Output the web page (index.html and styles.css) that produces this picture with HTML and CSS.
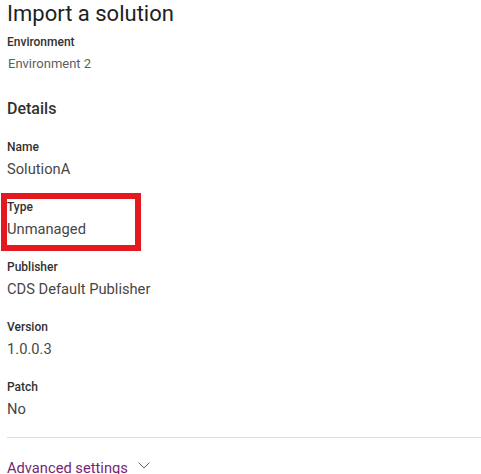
FILE: index.html
```html
<!DOCTYPE html>
<html>
<head>
<meta charset="utf-8">
<link rel="stylesheet" href="styles.css">
</head>
<body>
<div class="panel">
  <h1 class="title">Import a solution</h1>
  <div class="env">
    <div class="env-label">Environment</div>
    <div class="env-value">Environment 2</div>
  </div>
  <h2 class="section">Details</h2>
  <div class="fields">
    <div class="field">
      <div class="label">Name</div>
      <div class="value">SolutionA</div>
    </div>
    <div class="field highlighted">
      <div class="label">Type</div>
      <div class="value">Unmanaged</div>
    </div>
    <div class="field">
      <div class="label">Publisher</div>
      <div class="value">CDS Default Publisher</div>
    </div>
    <div class="field">
      <div class="label">Version</div>
      <div class="value">1.0.0.3</div>
    </div>
    <div class="field">
      <div class="label">Patch</div>
      <div class="value">No</div>
    </div>
  </div>
  <hr class="divider">
  <button class="advanced">Advanced settings
    <svg class="chev" width="12" height="7" viewBox="0 0 12 7"><path d="M0.5 0.5 L6 6 L11.5 0.5" fill="none" stroke="#605e5c" stroke-width="1"/></svg>
  </button>
</div>
</body>
</html>
```
FILE: styles.css
```css
html, body {
  margin: 0;
  padding: 0;
  background: #fff;
}
body {
  font-family: Roboto, "Noto Sans", sans-serif;
  color: #323130;
  overflow: hidden;
}
.panel {
  padding: 0 0 0 7px;
  display: flex;
  flex-direction: column;
  align-items: flex-start;
}
.title {
  margin: 0;
  font-size: 22px;
  font-weight: 400;
  line-height: 28px;
  color: #201f1e;
}
.env {
  margin-top: 6px;
}
.env-label {
  font-size: 12px;
  font-weight: 500;
  line-height: 16px;
  color: #323130;
}
.env-value {
  font-size: 13px;
  line-height: 18px;
  margin-top: 5px;
  padding-left: 1px;
  color: #605e5c;
}
.section {
  margin: 25px 0 0 0;
  font-size: 16px;
  font-weight: 500;
  line-height: 22px;
  color: #323130;
}
.fields {
  margin-top: 18.6px;
  display: flex;
  flex-direction: column;
  align-items: flex-start;
  gap: 20px;
}
.field {
  display: flex;
  flex-direction: column;
  gap: 4px;
}
.highlighted {
  width: 128px;
  padding-bottom: 6px;
  margin-bottom: -6px;
  outline: 6px solid #e3191f;
}
.label {
  font-size: 12px;
  font-weight: 500;
  line-height: 16px;
  color: #323130;
}
.value {
  font-size: 14.7px;
  line-height: 20px;
  color: #484644;
}
.divider {
  align-self: stretch;
  margin: 18.5px 0 0 0;
  border: 0;
  border-top: 1px solid #e1dfdd;
  height: 0;
}
.advanced {
  margin-top: 19.5px;
  padding: 0;
  border: 0;
  background: none;
  font-family: inherit;
  font-size: 14.7px;
  line-height: 20px;
  color: #742774;
  display: flex;
  align-items: center;
  gap: 10px;
}
.chev {
  margin-top: -4px;
}
```
